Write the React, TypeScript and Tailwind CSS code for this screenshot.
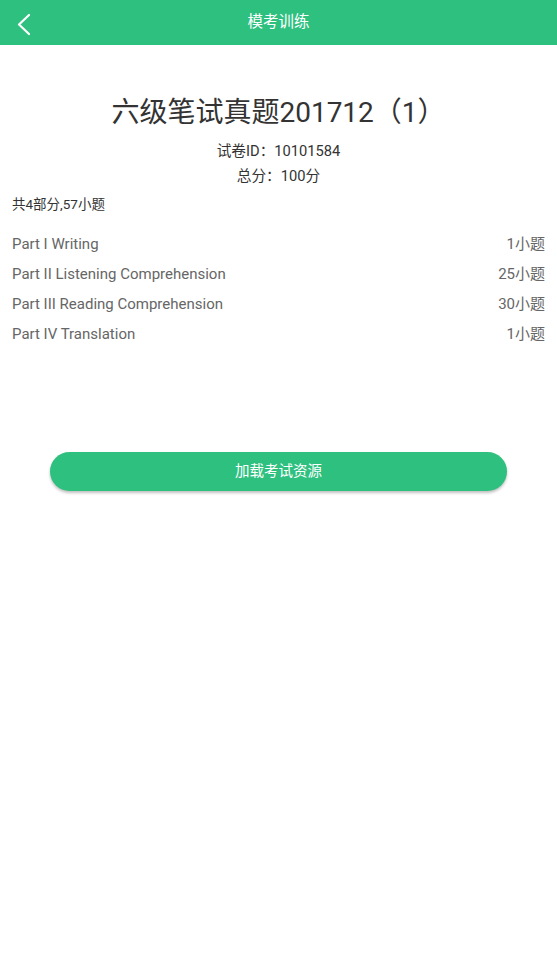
const parts = [
  { name: "Part I Writing", count: "1小题" },
  { name: "Part II Listening Comprehension", count: "25小题" },
  { name: "Part III Reading Comprehension", count: "30小题" },
  { name: "Part IV Translation", count: "1小题" },
];

export default function App() {
  return (
    <div
      className="min-h-[977px] w-full bg-white"
      style={{ fontFamily: 'Roboto, "Noto Sans CJK SC", sans-serif' }}
    >
      <header className="relative flex h-[45px] items-center justify-center bg-[#2ec07f]">
        <button className="absolute left-[16px] top-[13px] text-white">
          <svg width="16" height="23" viewBox="0 0 16 23" fill="none">
            <polyline
              points="13,2 3,11.5 13,21"
              stroke="currentColor"
              strokeWidth="2.2"
              strokeLinecap="round"
              strokeLinejoin="round"
            />
          </svg>
        </button>
        <h1 className="text-[15.5px] text-white">模考训练</h1>
      </header>

      <main className="px-3">
        <h2 className="mt-[50px] text-center text-[28px] leading-[36px] text-[#333]">
          六级笔试真题201712（1）
        </h2>
        <p className="mt-[8px] text-center text-[14.7px] leading-[25px] text-[#333]">
          试卷ID：10101584
        </p>
        <p className="text-center text-[14.7px] leading-[25px] text-[#333]">总分：100分</p>
        <p className="mt-[5px] text-[13.5px] leading-[20px] text-[#333]">共4部分,57小题</p>

        <ul className="mt-[15px]">
          {parts.map((p) => (
            <li
              key={p.name}
              className="flex h-[30px] items-center justify-between text-[15px] text-[#666]"
            >
              <span>{p.name}</span>
              <span>{p.count}</span>
            </li>
          ))}
        </ul>

        <div className="mt-[103px] flex justify-center">
          <button className="h-[39px] w-[457px] rounded-full bg-[#2ec07f] text-[14.5px] text-white shadow-[0_2px_3px_rgba(0,0,0,0.25)]">
            加载考试资源
          </button>
        </div>
      </main>
    </div>
  );
}
